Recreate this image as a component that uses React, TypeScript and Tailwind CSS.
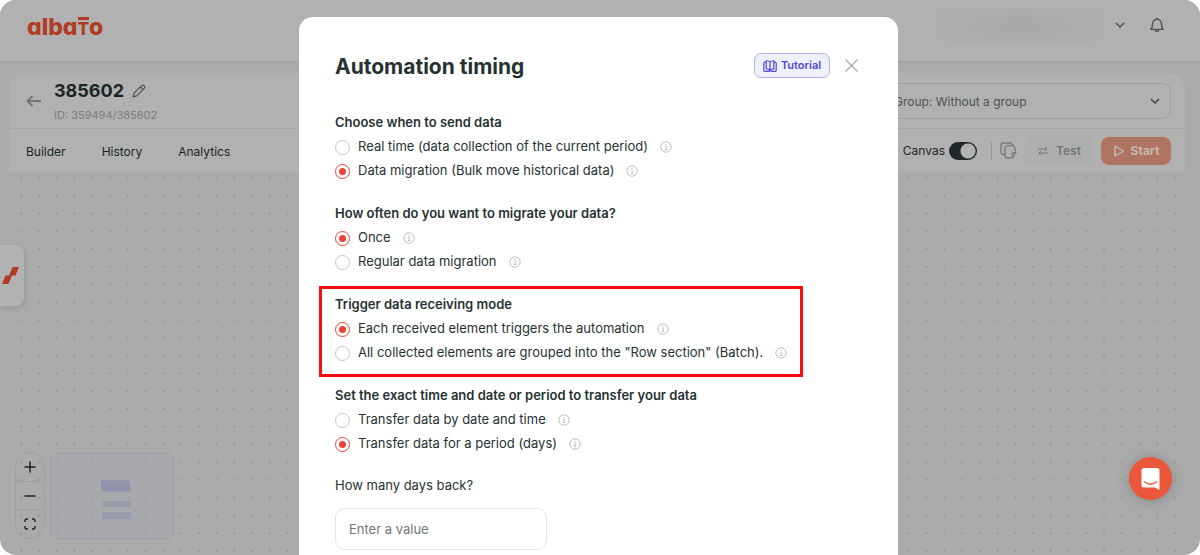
import type { ReactNode } from "react";

interface RadioOption {
  label: string;
  checked?: boolean;
}

interface RadioGroupProps {
  name: string;
  title: string;
  options: RadioOption[];
  children?: ReactNode;
}

const InfoIcon = () => (
  <svg viewBox="0 0 12 12" className="size-3 text-[#b4b8b8]" fill="none" stroke="currentColor">
    <circle cx="6" cy="6" r="5.2" strokeWidth="0.9" />
    <path d="M5.2 5.2h1v3.2M4.9 8.5h2.5" strokeWidth="0.9" />
    <circle cx="6" cy="3.3" r="0.6" fill="currentColor" stroke="none" />
  </svg>
);

const RadioGroup = ({ name, title, options, children }: RadioGroupProps) => (
  <div className="relative">
    <fieldset>
      <legend className="h-[25px] text-[13px] leading-6 font-semibold">{title}</legend>
      {options.map((option) => (
        <div key={option.label} className="flex h-6 items-center gap-3">
          <label className="flex items-center gap-2">
            <input
              type="radio"
              name={name}
              defaultChecked={option.checked}
              className="size-[15px] shrink-0 appearance-none rounded-full border border-[#c4c7c7] bg-clip-content p-[3px] checked:border-[#ef4236] checked:bg-[#ef4236]"
            />
            {option.label}
          </label>
          <InfoIcon />
        </div>
      ))}
    </fieldset>
    {children}
  </div>
);

const Header = () => (
  <header className="flex h-[61px] items-start justify-between bg-[#b1b1b1] pr-[35px] pl-[27px] shadow-[0_1px_3px_#9c9c9c]">
    <div className="mt-[13px] flex text-[23px] leading-7 font-extrabold text-[#b03c23] [font-feature-settings:'cv11']">
      <span>alba</span>
      <span className="relative text-[17px] leading-8">
        T
        <span className="absolute inset-x-0 top-1 h-[3px] bg-[#b03c23]" />
      </span>
      <span>o</span>
    </div>
    <div className="flex items-center pt-2">
      <div className="h-[34px] w-[169px] bg-[radial-gradient(ellipse_at_center,#a7a9a8,#aeb0af)]" />
      <button type="button" aria-label="Account" className="ml-2.5">
        <svg viewBox="0 0 12 12" className="size-3" fill="none" stroke="#4c5252" strokeWidth="1.5">
          <path d="M2 4l4 4 4-4" />
        </svg>
      </button>
      <button type="button" aria-label="Notifications" className="ml-[23px]">
        <svg viewBox="0 0 16 16" className="size-4" fill="none" stroke="#4c5252" strokeWidth="1.4" strokeLinejoin="round">
          <path d="M1.8 12.4c1.300-1 1.700-2.200 1.700-5.400C3.500 4.300 5.400 2.300 8 2.300s4.500 2 4.500 4.700c0 3.200.4 4.400 1.700 5.400zM6.300 12.600c0 2.700 3.400 2.700 3.400 0M8 .8v1.500" />
        </svg>
      </button>
    </div>
  </header>
);

const AutomationBar = () => (
  <section className="rounded-t-[18px] bg-[#b1b1b1]">
    <div className="flex h-14 items-center justify-between border-b border-[#a6a6a6] pr-3.5 pl-[17px]">
      <div className="flex items-center">
        <button type="button" aria-label="Back">
          <svg viewBox="0 0 16 12" className="h-3 w-4" fill="none" stroke="#6f7474" strokeWidth="1.8">
            <path d="M15 6H1.500M6.500 1L1.500 6l5 5" />
          </svg>
        </button>
        <div className="ml-3 pt-1">
          <h1 className="flex items-center gap-2 text-[18px] leading-6 font-bold text-[#1a2626]">
            385602
            <svg viewBox="0 0 14 14" className="size-3.5" fill="none" stroke="#4c5252" strokeWidth="1.2" strokeLinejoin="round">
              <path d="M1.200 12.800l.8-3.600 7.600-7.600c1.700-1.500 4.200.9 2.700 2.700l-7.600 7.600zM8.500 3l2.500 2.500" />
            </svg>
          </h1>
          <p className="text-[11px] leading-6 text-[#7c8080]">ID: 359494/385602</p>
        </div>
      </div>
      <div className="relative w-[290px]">
        <select
          aria-label="Group"
          className="h-9 w-full appearance-none rounded-lg border border-[#9fa1a1] pt-0.5 pl-3 text-[12px] text-[#4c5454]"
        >
          <option>Group: Without a group</option>
        </select>
        <svg viewBox="0 0 12 12" className="pointer-events-none absolute top-3 right-2.5 size-3" fill="none" stroke="#3c4444" strokeWidth="1.500">
          <path d="M2 4l4 4 4-4" />
        </svg>
      </div>
    </div>
    <div className="flex h-[43px] items-center justify-between pr-3.5 pl-[17px] text-[12px]">
      <nav className="flex gap-9 pt-0.5 text-[#1a2626]">
        <a href="#builder">Builder</a>
        <a href="#history">History</a>
        <a href="#analytics">Analytics</a>
      </nav>
      <div className="flex items-center">
        <label className="flex items-center gap-1 text-[#1a2626]">
          Canvas
          <input
            type="checkbox"
            defaultChecked
            className="h-[18px] w-7 appearance-none rounded-full bg-[#1f2929] bg-[radial-gradient(circle_at_19px_9px,#b1b1b1_7px,transparent_8px)]"
          />
        </label>
        <span className="ml-3.5 h-[18px] w-px bg-[#989a9a]" />
        <button type="button" aria-label="Copy" className="ml-2">
          <svg viewBox="0 0 17 17" className="size-[17px]" fill="none" stroke="#747979" strokeWidth="1.300" strokeLinejoin="round">
            <path d="M4.500 12.500H3a2 2 0 0 1-2-2V3a2 2 0 0 1 2-2h7a2 2 0 0 1 2 2v.5" />
            <path d="M6.200 4.200l6.300-.9a1.500 1.500 0 0 1 1.700 1.200l1.800 6-3.200 5-5.600.5a2 2 0 0 1-2-1.800L4.600 6a1.800 1.800 0 0 1 1.600-1.800zM16 10.500l-3 .3a1 1 0 0 0-.8 1.200l.6 3.500" />
          </svg>
        </button>
        <button type="button" className="ml-2 flex h-7 w-[69px] items-center justify-center gap-2 rounded-lg bg-[#adafae] font-semibold text-[#727777]">
          <svg viewBox="0 0 10 10" className="size-2.5" fill="none" stroke="currentColor">
            <path d="M0 3h9M7 1l2 2-2 2M10 7H1M3 5L1 7l2 2" />
          </svg>
          Test
        </button>
        <button type="button" className="ml-[7px] flex h-7 w-[70px] items-center justify-center gap-1.5 rounded-lg bg-[#b07462] font-bold text-[#c3b9b5]">
          <svg viewBox="0 0 12 12" className="size-3" fill="none" stroke="currentColor" strokeWidth="1.400" strokeLinejoin="round">
            <path d="M2 1l8.500 5L2 11z" />
          </svg>
          Start
        </button>
      </div>
    </div>
  </section>
);

// dot grid: four dots per 71px tile
const DotGrid = () => {
  const steps = [0, 17.75, 35.5, 53.25];

  return (
    <svg className="absolute inset-0 size-full" aria-hidden="true">
      <pattern id="dots" x="11.500" y="5.500" width="71" height="71" patternUnits="userSpaceOnUse">
        {steps.map((x) => steps.map((y) => <rect key={`${x}-${y}`} x={x} y={y} width="1.500" height="1.200" fill="#7a7f7f" />))}
      </pattern>
      <rect width="100%" height="100%" fill="url(#dots)" />
    </svg>
  );
};

const ZoomControls = () => (
  <div className="flex h-[87px] w-[30px] flex-col divide-y divide-[#a0a0a0] rounded-full border border-[#a0a0a0] text-[#1a2626]">
    <button type="button" aria-label="Zoom in" className="flex flex-1 items-center justify-center">
      <svg viewBox="0 0 12 12" className="size-3" stroke="currentColor" strokeWidth="1.500">
        <path d="M6 .5v11M.5 6h11" />
      </svg>
    </button>
    <button type="button" aria-label="Zoom out" className="flex flex-1 items-center justify-center">
      <svg viewBox="0 0 12 12" className="size-3" stroke="currentColor" strokeWidth="1.500">
        <path d="M.5 6h11" />
      </svg>
    </button>
    <button type="button" aria-label="Fit view" className="flex flex-1 items-center justify-center">
      <svg viewBox="0 0 12 12" className="size-3" fill="none" stroke="currentColor" strokeWidth="1.400">
        <path d="M1 4V2.500Q1 1 2.500 1H4M8 1h1.500Q11 1 11 2.500V4M11 8v1.500Q11 11 9.500 11H8M4 11H2.500Q1 11 1 9.500V8" />
      </svg>
    </button>
  </div>
);

const MiniMap = () => (
  <svg viewBox="0 0 124 86" className="h-[86px] w-[124px]" aria-hidden="true">
    <rect x="0.5" y="0.5" width="123" height="85" rx="7" fill="#a2a8b2" fillOpacity="0.400" stroke="#9ba1b3" />
    <rect x="51" y="27" width="28" height="9" fill="#9496ab" />
    <rect x="53" y="30" width="28" height="9" fill="#9496ab" fillOpacity="0.800" />
    <path d="M52 31h28M52 33.500h28M52 36h28" stroke="#8583a8" strokeDasharray="1 1" />
    <rect x="53" y="48" width="28" height="6" fill="#989bac" />
    <rect x="52" y="59" width="29" height="7" fill="#989bac" />
  </svg>
);

const TimingDialog = () => (
  <div
    role="dialog"
    aria-labelledby="timing-title"
    className="min-h-[600px] w-[599px] rounded-[14px] bg-white px-9 pt-9 text-[13px] text-[#263232]"
  >
    <div className="flex h-[25px] items-start pr-1">
      <h2 id="timing-title" className="flex-1 text-[21px] leading-7 font-bold">
        Automation timing
      </h2>
      <button
        type="button"
        className="flex h-[25px] w-[76px] items-center justify-center gap-1 rounded-[7px] border border-[#b3aef0] bg-[#f0effc] text-[11px] font-semibold text-[#5148d6]"
      >
        <svg viewBox="0 0 14 12" className="h-3 w-3.5" fill="none" stroke="currentColor" strokeWidth="1.200" strokeLinejoin="round">
          <path d="M7 2.200C6 1 4.500.6 3.200.8v8c1.600 0 2.800.3 3.800 1.600 1-1.300 2.200-1.600 3.800-1.600v-8C9.500.6 8 1 7 2.200zM7 2.200v8M3 2.200H2a1.200 1.200 0 0 0-1.200 1.200v6.800a1.200 1.200 0 0 0 1.200 1.200h3.500l1.500-.6 1.500.6H12a1.200 1.200 0 0 0 1.200-1.200V3.400A1.200 1.200 0 0 0 12 2.200h-1" />
        </svg>
        Tutorial
      </button>
      <button type="button" aria-label="Close" className="ml-[15px] flex h-[25px] items-center">
        <svg viewBox="0 0 13 13" className="size-[13px]" stroke="#a9adad" strokeWidth="1.300">
          <path d="M.5.5l12 12M12.500.5l-12 12" />
        </svg>
      </button>
    </div>

    <form className="mt-8 flex flex-col gap-[18px]">
      <RadioGroup
        name="when"
        title="Choose when to send data"
        options={[
          { label: "Real time (data collection of the current period)" },
          { label: "Data migration (Bulk move historical data)", checked: true },
        ]}
      />
      <RadioGroup
        name="frequency"
        title="How often do you want to migrate your data?"
        options={[{ label: "Once", checked: true }, { label: "Regular data migration" }]}
      />
      <RadioGroup
        name="mode"
        title="Trigger data receiving mode"
        options={[
          { label: "Each received element triggers the automation", checked: true },
          { label: 'All collected elements are grouped into the "Row section" (Batch).' },
        ]}
      >
        {/* highlight frame */}
        <div className="pointer-events-none absolute -top-1.5 right-[59px] -bottom-3 -left-4 border-[3px] border-[#fb0d0d]" />
      </RadioGroup>
      <RadioGroup
        name="period"
        title="Set the exact time and date or period to transfer your data"
        options={[
          { label: "Transfer data by date and time" },
          { label: "Transfer data for a period (days)", checked: true },
        ]}
      />
      <div>
        <label htmlFor="days" className="block leading-[22px]">
          How many days back?
        </label>
        <input
          id="days"
          type="text"
          placeholder="Enter a value"
          className="mt-3 h-[42px] w-[212px] rounded-[10px] border border-[#e3e4ea] px-[13px] placeholder:text-[#727979]"
        />
      </div>
    </form>
  </div>
);

const App = () => {
  return (
    <main className="relative flex h-screen flex-col overflow-hidden rounded-[16px] bg-[#ababab] font-['Inter',sans-serif]">
      <Header />
      <div className="flex flex-1 flex-col pt-3 pr-[15px] pl-[9px]">
        <AutomationBar />
        <div className="relative flex-1">
          <DotGrid />
          <div className="absolute bottom-4 left-1.5 flex items-end gap-[5px]">
            <ZoomControls />
            <MiniMap />
          </div>
        </div>
      </div>

      <div className="absolute top-[245px] left-0 flex h-[61px] w-6 items-center rounded-r-[8px] bg-[#b2b2b2] pl-0.5 shadow-[1px_2px_6px_#939797]">
        <svg viewBox="0 0 17 17" className="size-[17px]" fill="#b03c23" aria-hidden="true">
          <path d="M10.500 0H17l-3.500 8.500H7zM3.500 8.500H10L6.500 17H0z" />
        </svg>
      </div>

      <button
        type="button"
        aria-label="Open chat"
        className="absolute right-7 bottom-[55px] flex size-[43px] items-center justify-center rounded-full bg-[#ea573a] shadow-[0_1px_14px_#858888]"
      >
        <svg viewBox="0 0 20 22" className="h-[22px] w-5" aria-hidden="true">
          <path d="M3 0h13a2.500 2.500 0 0 1 2.500 2.500V22L14 19.500H3A2.500 2.500 0 0 1 .5 17V2.500A2.500 2.500 0 0 1 3 0z" fill="#fff" />
          <path d="M3.500 14q6 4.500 12 0" fill="none" stroke="#ea573a" strokeWidth="1.300" strokeLinecap="round" />
        </svg>
      </button>

      <div className="absolute inset-0 flex items-start justify-center overflow-hidden pt-[17px] pr-[3px]">
        <TimingDialog />
      </div>
    </main>
  );
};

export default App;
